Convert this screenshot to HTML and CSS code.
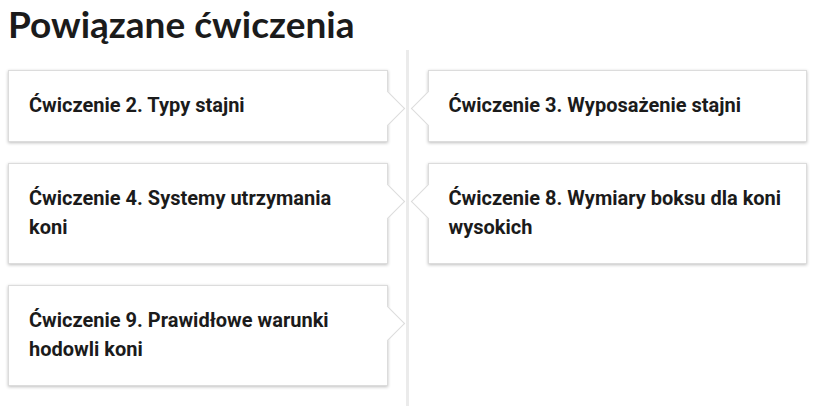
FILE: index.html
```html
<!DOCTYPE html>
<html lang="pl">
<head>
  <meta charset="UTF-8" />
  <meta name="viewport" content="width=device-width, initial-scale=1.0"/>
  <title>Powiązane ćwiczenia</title>
  <link rel="stylesheet" href="styles.css">
</head>
<body>
  <div class="page">
    <h1 class="heading">Powiązane ćwiczenia</h1>

    <div class="timeline">
      <a class="item left" href="#">Ćwiczenie 2. Typy stajni</a>
      <a class="item right" href="#">Ćwiczenie 3. Wyposażenie stajni</a>
      <a class="item left" href="#">Ćwiczenie 4. Systemy utrzymania koni</a>
      <a class="item right" href="#">Ćwiczenie 8. Wymiary boksu dla koni wysokich</a>
      <a class="item left" href="#">Ćwiczenie 9. Prawidłowe warunki hodowli koni</a>
    </div>
  </div>
</body>
</html>
```

FILE: styles.css
```css
* { box-sizing: border-box; margin: 0; padding: 0; }

body {
  background-color: #fff;
  color: #1b1b1b;
  font-family: 'Roboto', 'Liberation Sans', sans-serif;
}

.page {
  padding: 2px 8px 0;
}

.heading {
  font-family: 'Lato', 'Liberation Sans', sans-serif;
  font-size: 37px;
  font-weight: 700;
  line-height: 44px;
  color: #1b1b1b;
}

/* two columns with a vertical line down the middle */
.timeline {
  position: relative;
  display: grid;
  grid-template-columns: 1fr 1fr;
  column-gap: 40px;
  row-gap: 21px;
  align-items: start;
  margin-top: 4px;
  padding: 20px 0;
}

.timeline::before {
  content: '';
  position: absolute;
  top: 0;
  bottom: 0;
  left: 50%;
  width: 3px;
  margin-left: -2px;
  background-color: #ebebeb;
}

.item {
  position: relative;
  display: block;
  padding: 20px;
  background-color: #fff;
  border: 1px solid #dcdcdc;
  box-shadow: 0 1px 3px rgba(0, 0, 0, 0.25);
  color: #1b1b1b;
  text-decoration: none;
  font-size: 20px;
  font-weight: 700;
  line-height: 29.5px;
}

.item.left { grid-column: 1; }
.item.right { grid-column: 2; }

/* small pointer towards the line */
.item::after {
  content: '';
  position: absolute;
  top: 25px;
  width: 24px;
  height: 24px;
  background-color: #fff;
  transform: rotate(45deg);
}

.item.left::after {
  right: -13px;
  border-top: 1px solid #dcdcdc;
  border-right: 1px solid #dcdcdc;
}

.item.right::after {
  left: -13px;
  border-bottom: 1px solid #dcdcdc;
  border-left: 1px solid #dcdcdc;
}
```
